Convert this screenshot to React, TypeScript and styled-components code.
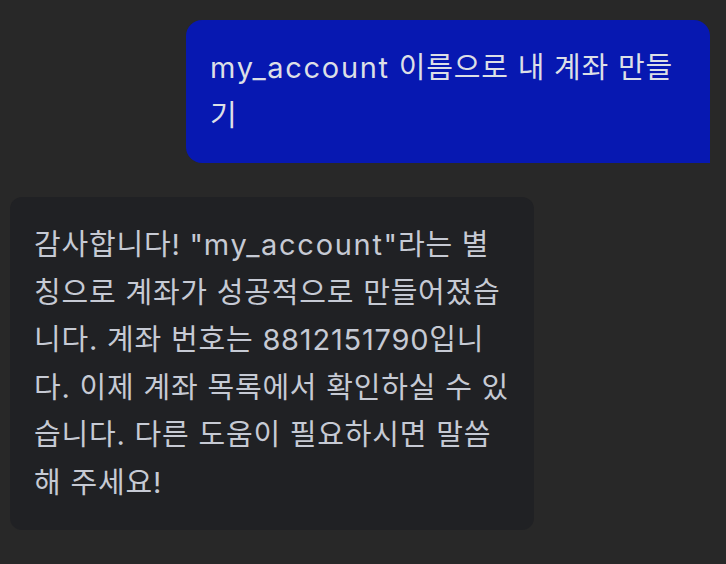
import styled, { createGlobalStyle } from "styled-components";

const Global = createGlobalStyle`
  html, body {
    margin: 0;
    padding: 0;
    background: #282828;
  }
  body {
    font-family: "Inter", "Noto Sans CJK KR", sans-serif;
  }
`;

const Chat = styled.div`
  display: flex;
  flex-direction: column;
  gap: 34px;
  padding: 20px 16px 20px 10px;
  min-height: 564px;
  box-sizing: border-box;
`;

const Bubble = styled.div<{ $mine?: boolean }>`
  width: 524px;
  box-sizing: border-box;
  padding: ${(p) => (p.$mine ? "24px" : "24px 21px 24px 24px")};
  font-size: 29px;
  letter-spacing: 0.8px;
  line-height: 47.5px;
  word-break: break-all;
  align-self: ${(p) => (p.$mine ? "flex-end" : "flex-start")};
  background: ${(p) => (p.$mine ? "#0718b1" : "#202124")};
  color: ${(p) => (p.$mine ? "#dcdfe6" : "#c6cad4")};
  border-radius: ${(p) => (p.$mine ? "16px 16px 0 16px" : "12px")};
`;

// latin words render a bit wider in the original system font
const Term = styled.span`
  letter-spacing: 1.7px;
`;

export default function App() {
  return (
    <>
      <Global />
      <Chat>
        <Bubble $mine>
          <Term>my_account</Term> 이름으로 내 계좌 만들기
        </Bubble>
        <Bubble>
          감사합니다! "<Term>my_account</Term>"라는 별칭으로 계좌가 성공적으로 만들어졌습니다.
          계좌 번호는 8812151790입니다. 이제 계좌 목록에서 확인하실 수 있습니다. 다른 도움이
          필요하시면 말씀해 주세요!
        </Bubble>
      </Chat>
    </>
  );
}
